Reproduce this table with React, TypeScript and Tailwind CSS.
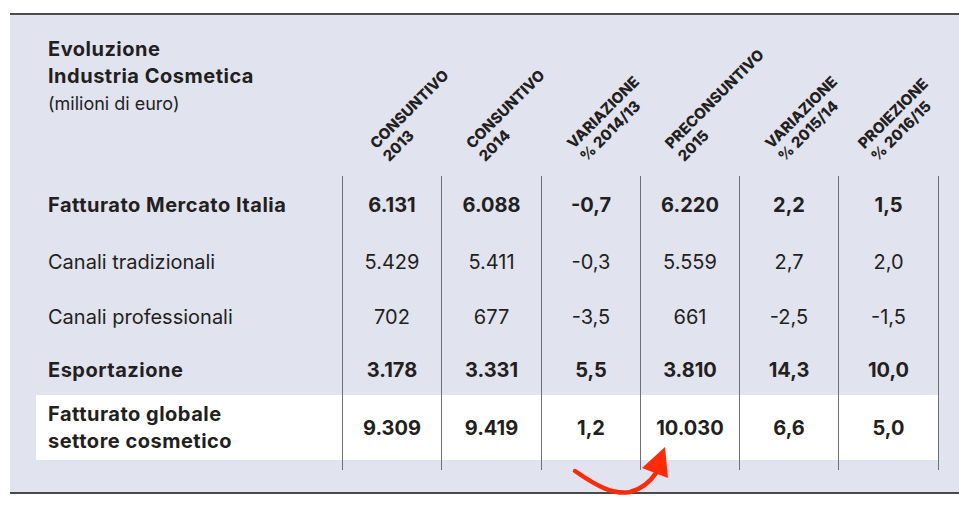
const FONT = { fontFamily: 'Inter, "Noto Sans", sans-serif' }

type Col = { top: string; bottom: string; ml: string; w: string }

const COLS: Col[] = [
  { top: 'CONSUNTIVO', bottom: '2013', ml: 'ml-[50px]', w: 'w-[99px]' },
  { top: 'CONSUNTIVO', bottom: '2014', ml: 'ml-[47px]', w: 'w-[100px]' },
  { top: 'VARIAZIONE', bottom: '% 2014/13', ml: 'ml-[48px]', w: 'w-[99px]' },
  { top: 'PRECONSUNTIVO', bottom: '2015', ml: 'ml-[47px]', w: 'w-[99px]' },
  { top: 'VARIAZIONE', bottom: '% 2015/14', ml: 'ml-[48px]', w: 'w-[99px]' },
  { top: 'PROIEZIONE', bottom: '% 2016/15', ml: 'ml-[42px]', w: 'w-[101px]' },
]

type Row = { label: string[]; values: string[]; bold: boolean; h: string; white?: boolean }

const ROWS: Row[] = [
  { label: ['Fatturato Mercato Italia'], values: ['6.131', '6.088', '-0,7', '6.220', '2,2', '1,5'], bold: true, h: 'h-[58px]' },
  { label: ['Canali tradizionali'], values: ['5.429', '5.411', '-0,3', '5.559', '2,7', '2,0'], bold: false, h: 'h-[55px]' },
  { label: ['Canali professionali'], values: ['702', '677', '-3,5', '661', '-2,5', '-1,5'], bold: false, h: 'h-[55px]' },
  { label: ['Esportazione'], values: ['3.178', '3.331', '5,5', '3.810', '14,3', '10,0'], bold: true, h: 'h-[51px]' },
  {
    label: ['Fatturato globale', 'settore cosmetico'],
    values: ['9.309', '9.419', '1,2', '10.030', '6,6', '5,0'],
    bold: true,
    h: 'h-[65px]',
    white: true,
  },
]

function Cells({ values, bold }: { values: string[]; bold?: boolean }) {
  return (
    <>
      {COLS.map((c, i) => (
        <div
          key={i}
          className={`${c.w} h-full flex items-center justify-center border-l border-[#6f6f74] ${
            i === COLS.length - 1 ? 'border-r' : ''
          } ${bold ? 'font-bold' : 'font-normal'}`}
        >
          {values[i]}
        </div>
      ))}
    </>
  )
}

export default function App() {
  return (
    <div className="w-[959px] h-[507px] bg-white relative overflow-hidden text-[#231f20]" style={FONT}>
      <div className="mt-[13px] ml-[10px] h-[481px] bg-[#e1e3ef] border-t-2 border-b-2 border-[#4a4a4d] flex flex-col">
        {/* header */}
        <div className="flex h-[161px] shrink-0">
          <div className="w-[332px] pl-[38px] pt-[21px]">
            <p className="text-[20px] leading-[27px] font-bold tracking-[0.5px]">Evoluzione</p>
            <p className="text-[20px] leading-[27px] font-bold tracking-[0.5px]">Industria Cosmetica</p>
            <p className="text-[18px] leading-[27px] font-normal">(milioni di euro)</p>
          </div>
          {COLS.map((c, i) => (
            <div key={i} className={`${c.w} h-full flex items-end`}>
              <div
                className={`${c.ml} mb-[11px] origin-bottom-left -rotate-45 whitespace-nowrap text-[15px] leading-[18px] font-extrabold`}
              >
                <div>{c.top}</div>
                <div>{c.bottom}</div>
              </div>
            </div>
          ))}
        </div>

        {/* body */}
        {ROWS.map((r, i) => (
          <div key={i} className={`flex ${r.h} text-[20px]`}>
            {r.white ? (
              <div className="ml-[26px] w-[306px] pl-[12px] h-full flex flex-col justify-center bg-white leading-[27px] font-bold tracking-[0.5px]">
                {r.label.map((l) => (
                  <span key={l}>{l}</span>
                ))}
              </div>
            ) : (
              <div
                className={`w-[332px] pl-[38px] h-full flex flex-col justify-center ${
                  r.bold ? 'font-bold tracking-[0.5px]' : 'font-normal'
                }`}
              >
                {r.label.map((l) => (
                  <span key={l}>{l}</span>
                ))}
              </div>
            )}
            <div className={`flex h-full ${r.white ? 'bg-white' : ''}`}>
              <Cells values={r.values} bold={r.bold} />
            </div>
          </div>
        ))}
        <div className="flex h-[10px]">
          <div className="w-[332px]" />
          <Cells values={[]} />
        </div>
      </div>

      <svg className="absolute left-0 top-0 pointer-events-none" width="959" height="507" viewBox="0 0 959 507">
        <path
          d="M575 471 C598 487 614 495 630 492 C642 489 650 482 656 473"
          fill="none"
          stroke="#ff2a08"
          strokeWidth="4.5"
          strokeLinecap="round"
        />
        <polygon points="642,468 665,447 668,478" fill="#ff2a08" />
      </svg>
    </div>
  )
}
